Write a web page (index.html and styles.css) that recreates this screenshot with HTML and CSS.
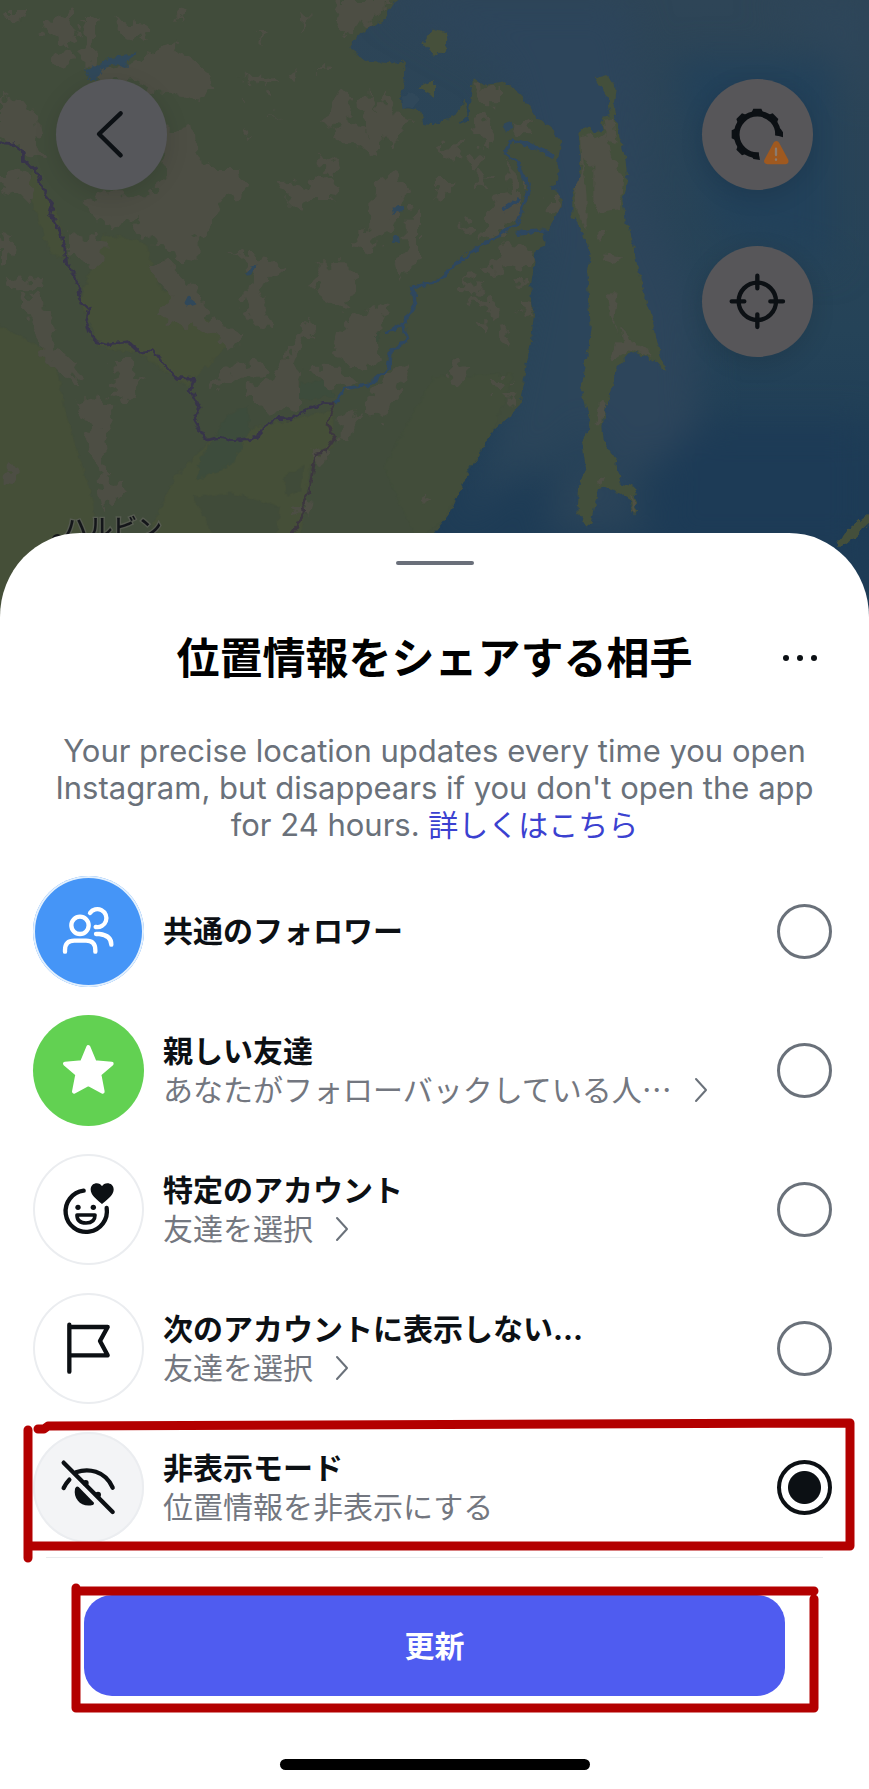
FILE: index.html
```html
<!DOCTYPE html>
<html lang="ja">
<head>
<meta charset="utf-8">
<meta name="viewport" content="width=device-width, initial-scale=1">
<title>位置情報をシェアする相手</title>
<link rel="stylesheet" href="styles.css">
</head>
<body>
<div class="screen">
  <header class="map">
    <svg class="map-art" viewBox="0 0 2607 1980" preserveAspectRatio="xMidYMin slice" aria-hidden="true">
      <defs>
        <filter id="rough" x="-5%" y="-5%" width="110%" height="110%" color-interpolation-filters="sRGB">
          <feTurbulence type="fractalNoise" baseFrequency="0.05" numOctaves="2" seed="4" result="n"/>
          <feDisplacementMap in="SourceGraphic" in2="n" scale="22" xChannelSelector="R" yChannelSelector="G"/>
        </filter>
        <filter id="patchy" x="-5%" y="-5%" width="110%" height="110%" color-interpolation-filters="sRGB">
          <feTurbulence type="fractalNoise" baseFrequency="0.03" numOctaves="2" seed="9" result="n"/>
          <feDisplacementMap in="SourceGraphic" in2="n" scale="70" xChannelSelector="R" yChannelSelector="G"/>
        </filter>
        <filter id="soft" x="-40%" y="-40%" width="180%" height="180%" color-interpolation-filters="sRGB"><feGaussianBlur stdDeviation="55"/></filter>
        <clipPath id="land"><use href="#mainland"/></clipPath>
        <linearGradient id="sea" x1="0" y1="0" x2="0" y2="1">
          <stop offset="0" stop-color="#2e4557"/><stop offset="0.5" stop-color="#254358"/><stop offset="0.75" stop-color="#1e3c56"/><stop offset="1" stop-color="#1e3c56"/>
        </linearGradient>
      </defs>
      <rect width="2607" height="1980" fill="url(#sea)"/>
      <g filter="url(#soft)">
        <path fill="#2d455b" d="M1150 0H1880L1930 260L1950 600L2080 900L2100 1350L1860 1420L1600 1100L1620 700L1500 200Z"/>
        <path fill="#22415a" d="M2020 180H2500V800L2150 700Z"/>
        <path fill="#2b455a" d="M1600 750H1740V1350L1500 1450L1360 1600L1480 1350Z"/>
        <path fill="#2b4459" d="M1680 1400L1900 1350L1930 1600H1640Z"/>
        <path fill="#1d3b56" d="M2110 1270H2607V1660H1960L2000 1350Z"/>
        <path fill="#2e465a" d="M2300 0H2607V300L2450 120Z"/>
      </g>
      <g filter="url(#rough)">
        <path id="mainland" fill="#414c3b" d="M-40-40H1215L1150 60L1080 100L1045 145L1100 185L1180 190L1215 180L1210 260L1200 300L1220 325L1260 330L1270 370L1302 372L1362 350L1397 300L1402 345L1380 372L1404 362L1418 240L1462 255L1517 245L1567 290L1602 345L1652 385L1687 425L1672 480V540L1652 560L1692 600L1662 660L1632 700L1630 740L1607 750L1602 800L1592 860V900L1602 945L1592 1030L1577 1110L1557 1220L1472 1300L1432 1370L1392 1440L1352 1540L1302 1602L1250 1700L1200 2000H-40Z"/>
        <path fill="#46503b" d="M1302 85L1345 100L1335 150L1302 168L1270 130Z M1255 265L1302 240V290Z"/>
        <path fill="#434f3b" d="M1787 235L1822 225L1850 265L1842 330L1857 400L1877 480L1882 540L1867 600L1877 660L1897 720L1912 800L1932 880L1952 940L1967 1000L1982 1070L2005 1115L1942 1070L1892 1055L1852 1100L1842 1150L1822 1200L1807 1280L1812 1330L1847 1380L1862 1450L1902 1460L1914 1510L1902 1545L1882 1490L1822 1465L1797 1470L1782 1520L1772 1570L1757 1580L1732 1540L1737 1460L1757 1400L1747 1330L1772 1270L1742 1160L1757 1080L1772 980L1767 900L1762 820L1772 760L1742 690L1717 650V580L1737 540L1742 470L1732 400L1772 375L1782 400L1812 390L1802 350L1832 345L1822 290Z"/>
        <path fill="#444f3b" d="M2620 1530L2540 1590L2505 1640L2530 1640L2620 1560Z"/>
      </g>
      <g clip-path="url(#land)">
        <g filter="url(#rough)">
          <path fill="#454f38" d="M310 700L440 730L470 850L700 1020L560 1160L420 1060L300 1040L240 900Z M-40 960L160 1060L200 1250L280 1500L300 2020H-40Z M640 1310L1000 1230L1000 1340L930 1400L900 1640H430L520 1440Z M100 500L170 640L210 780L150 760L80 560Z"/>
          <path fill="#3d4c3c" d="M680 1250L740 1220L750 1290L700 1390L590 1440L600 1380Z M900 1150L990 1140L1000 1190L890 1200Z M1090 1010L1140 990L1130 1060L1080 1050Z"/>
          <path fill="#445039" d="M1302 1130L1540 1120L1480 1290L1330 1560L1250 1620L1150 1400Z" opacity=".4"/>
          <path fill="#404b39" d="M580 1490L700 1480L840 1520L820 1640L640 1600Z M850 1430L910 1400L900 1470L860 1490Z"/>
        </g>
        <g filter="url(#patchy)" fill="#4d4e44">
          <path d="M120 60L210 40L240 90L200 140L130 100Z M350 60L430 70L440 110L390 130L350 100Z M150 150L220 160L210 200L160 190Z M30 30L80 30L60 70L20 60Z M290 215L430 180L520 120L560 170L620 210L640 260L600 300L520 280L460 270L400 240L290 250Z"/>
          <path d="M0 290L70 310L110 340L120 440L150 480L100 470L50 440L0 430Z M0 520L60 510L110 560L100 590L50 590L0 560Z M480 390L580 380L590 470L650 510L720 510L740 580L660 600L640 680L590 720L590 780L530 770L420 700L400 660L340 690L240 600L300 580L450 580L500 540Z"/>
          <path d="M440 800L500 780L570 850L640 960L690 980L730 1000L690 1050L640 1000L560 980L470 950L520 900Z M210 700L320 720L310 790L260 800L210 760Z M0 700L40 710L30 780L0 790Z M20 840L130 830L110 880L40 880Z M250 60L290 60L280 200L250 200Z M1020 0H1180L1120 60L1030 100L1010 60Z"/>
          <path d="M960 360L1020 270L1050 300L1040 360L1100 400L1080 300L1110 270L1120 340L1170 270L1190 340L1230 350L1180 440L1150 400L1130 470L1080 430L1010 430L1020 380Z M960 470L1010 480L1000 530L970 500Z M830 550L900 540L920 570L950 520L1010 550L1000 600L930 600L900 630L860 590Z M1120 560L1170 520L1230 570L1190 640L1160 700L1100 760L1050 740L1110 680Z M1220 640L1260 620L1260 780L1200 840L1190 780L1220 730Z"/>
          <path d="M960 790L1050 790L1080 850L1030 930L980 900L940 870Z M700 760L790 770L850 800L800 840L780 900L820 980L750 980L730 900L760 810Z M1040 960L1130 920L1180 900L1130 1000L1140 1080L1080 1110L1000 1060L1020 990Z M740 1170L830 1120L870 1050L930 960L940 1000L880 1060L900 1160L900 1220L800 1240L750 1210Z M620 1170L680 1100L780 1080L800 1130L720 1130Z M910 1100L1010 1100L1070 1150L1000 1170Z M1110 1170L1190 1100L1220 1090L1180 1220L1130 1260L1090 1240Z M1010 1250L1080 1230L1050 1320L1010 1310Z"/>
          <path d="M60 890L120 890L150 980L160 1050L220 1080L240 1150L190 1130L120 1060L100 980Z M340 1080L400 1080L400 1140L440 1130L380 1210L330 1190L360 1130Z M220 1210L300 1190L350 1250L310 1320L320 1440L380 1460L310 1530L290 1400L260 1310L270 1270Z M20 1380L50 1390L50 1440L20 1450Z M870 1520L930 1490L920 1550Z M940 1360L980 1350L960 1400Z M1270 1470L1285 1500L1260 1510Z"/>
          <path d="M1420 250L1500 260L1500 310L1440 310Z M1410 360L1470 350L1480 430L1450 440Z M1540 380L1600 360L1590 400L1550 400Z M1310 440L1390 430L1370 480L1320 470Z M1400 470L1440 470L1430 510Z M1440 510L1470 530L1460 570L1435 550Z M1310 540L1370 540L1340 590L1300 600Z M1520 490L1560 530L1560 590L1530 540Z M1460 640L1500 580L1560 570L1560 640L1500 700L1440 730Z M1380 660L1420 680L1400 710Z M1640 600L1690 600L1670 640L1640 640Z M1500 730L1600 740L1590 810L1520 790L1480 830L1450 800L1510 780Z M1390 830L1450 850L1430 890L1380 880Z M1540 850L1570 830L1570 860Z"/>
          <path d="M1410 900L1470 890L1500 930L1490 950Z M1420 970L1460 970L1450 1010Z M1490 970L1530 1000L1520 1040L1495 1020Z M1340 1110L1370 1080L1410 1110L1370 1150Z M1470 1140L1530 1140L1510 1170L1490 1170Z M1560 910L1600 920L1590 950L1560 930Z M1520 1190L1550 1180L1540 1210Z M730 230L780 230L830 250L800 265Z M860 220L890 210L880 245Z M950 210L980 180L990 210Z M530 30L560 20L540 70Z M770 90L800 90L790 130Z M900 40L920 40L910 100Z M720 300L735 305L725 320Z M730 400L750 390L740 415Z M810 360L830 340L815 365Z"/>
        </g>
      </g>
      <g filter="url(#rough)" fill="#4f5046">
        <path d="M1740 410L1770 400L1790 420L1820 400L1830 460L1850 500L1870 540L1860 630L1800 640L1780 600L1780 500L1750 480L1760 590L1760 690L1730 640L1725 560L1745 520Z M1810 360L1840 355L1850 430L1825 420Z M1800 690L1820 690L1800 730L1790 710Z M1810 760L1870 770L1840 790L1810 780Z M1820 880L1850 880L1840 960L1855 1000L1830 950Z M1860 980L1890 1010L1900 1030L1950 1050L1960 1070L1890 1050L1850 1080L1830 1080L1850 1030L1870 1030Z M1810 1200L1820 1210L1805 1270L1785 1270L1800 1210Z M1790 1440L1820 1430L1800 1460Z M1890 1480L1912 1510L1900 1540Z"/>
      </g>
      <g filter="url(#rough)" fill="#30485a">
        <path d="M255 205L290 195L330 175L410 160L380 185L380 205L350 195L310 205L290 240L265 240Z M735 825L755 795L770 800L745 830Z M1175 625L1205 612L1210 630L1180 645Z M1175 705L1195 705L1200 725L1180 730Z M550 905L565 890L590 910L560 920Z M1505 375L1535 365L1540 385L1515 400Z M1205 290L1240 280L1260 300L1240 325L1210 320Z"/>
      </g>
      <g fill="none" stroke-linejoin="round" filter="url(#rough)">
        <path stroke="#2e475f" stroke-width="10" d="M1003 1212L1035 1165L1110 1155L1165 1105L1170 1060L1220 1020L1210 970L1245 910L1240 860L1302 850L1362 800L1432 740L1492 710L1552 670L1577 600L1587 560L1547 480L1512 460L1537 420L1602 440L1662 470M1210 970L1155 1000M1550 700L1640 690M1510 630L1560 595"/>
        <path stroke="#37344a" stroke-width="8" d="M-10 428L30 430L70 455V485L105 505L120 545L140 590L158 610L150 640L175 680L195 750L200 790L225 825L240 870L235 885L245 910L268 925L258 970L265 995L290 1025L320 1032L385 1025L420 1057L460 1052L490 1090L530 1135L583 1138L570 1170L600 1225L583 1260L612 1310L620 1320L660 1312L700 1322L775 1312L790 1280L830 1255L870 1257L930 1225L970 1210L1003 1212"/>
        <path stroke="#3c373f" stroke-width="8" d="M1003 1212L983 1270L1003 1315L980 1355L950 1362L940 1400L925 1480L910 1500L915 1540L890 1580L860 1620"/>
      </g>
      <circle cx="172" cy="1618" r="16" fill="#14161a"/>
      <text class="map-label" x="190" y="1610">ハルビン</text>
    </svg>
    <nav class="map-controls" aria-label="地図">
      <button class="round back" type="button" aria-label="戻る">
        <svg viewBox="-166 -166 333 333" aria-hidden="true"><path class="line" d="M28-63L-37-1L28 63"/></svg>
      </button>
      <div class="stack">
        <button class="round" type="button" aria-label="設定">
          <svg viewBox="-166 -166 333 333" aria-hidden="true">
            <path d="M62 4A62 62 0 1 0 5 62" fill="none" stroke="#0c1014" stroke-width="17"/>
            <g fill="#0c1014">
              <path id="tooth" d="M-19-62L-12-77H12L19-62Z"/>
              <use href="#tooth" transform="rotate(45)"/><use href="#tooth" transform="rotate(-45)"/><use href="#tooth" transform="rotate(-90)"/><use href="#tooth" transform="rotate(-135)"/>
              <path d="M60-18L70-17L77-6V9L54 2Z M-18 60L-12 74L8 77L4 58Z"/>
            </g>
            <path d="M57 30L30 80H84Z" fill="#9f5920" stroke="#9f5920" stroke-width="19" stroke-linejoin="round"/>
            <path d="M56 43V62M56 75V76" stroke="#8b7b6f" stroke-width="7" stroke-linecap="round"/>
          </svg>
        </button>
        <button class="round" type="button" aria-label="現在地">
          <svg viewBox="-166 -166 333 333" aria-hidden="true"><circle class="line" r="56"/><path class="line" d="M0-77V-39M0 77V39M-77 0H-39M77 0H39"/></svg>
        </button>
      </div>
    </nav>
  </header>

  <main class="sheet">
    <div class="handle"></div>
    <div class="sheet-head">
      <h1>位置情報をシェアする相手</h1>
      <button class="more" type="button" aria-label="その他"><i></i><i></i><i></i></button>
    </div>
    <p class="intro">Your precise location updates every time you open Instagram, but disappears if you don't open the app for 24 hours. <a href="#more">詳しくはこちら</a></p>

    <form class="form">
      <div class="options" role="radiogroup" aria-label="位置情報をシェアする相手">
        <div class="option">
          <svg class="avatar blue" viewBox="-166 -166 333 333" aria-hidden="true"><g fill="none" stroke="#fff" stroke-width="13" stroke-linecap="round" stroke-linejoin="round"><circle cx="-25" cy="-18" r="26"/><path d="M-70 61V56Q-70 28-42 28H-7Q21 28 21 56V61M5-55A27 27 0 1 1 22-13M23 8H33Q69 12 69 40"/></g></svg>
          <div class="copy"><label for="mutual">共通のフォロワー</label></div>
          <input type="radio" name="audience" id="mutual">
        </div>
        <div class="option">
          <svg class="avatar green" viewBox="-166 -166 333 333" aria-hidden="true"><path fill="#fff" stroke="#fff" stroke-width="12" stroke-linejoin="round" d="M0-70L19-24L70-20L33 12L43 64L0 41L-43 64L-33 12L-70-20L-19-24Z"/></svg>
          <div class="copy"><label for="close">親しい友達</label>
            <button class="detail" type="button"><span>あなたがフォローバックしている人<span class="ellipsis">…</span></span><svg class="chevron" viewBox="0 0 14 26" aria-hidden="true"><path d="M2 2L12 13L2 24"/></svg></button></div>
          <input type="radio" name="audience" id="close">
        </div>
        <div class="option">
          <svg class="avatar" viewBox="-166 -166 333 333" aria-hidden="true"><path class="line" d="M55-4A62 62 0 1 1-14-56"/><circle cx="-31" cy="-6" r="8"/><circle cx="15" cy="-6" r="8"/><path class="line thin" d="M-34 17H20Q20 41-7 41T-34 17Z"/><path d="M41-16C30-26 7-42 7-59C7-81 34-83 41-69C48-83 76-81 76-59C76-42 52-26 41-16Z"/></svg>
          <div class="copy"><label for="specific">特定のアカウント</label>
            <button class="detail" type="button"><span>友達を選択</span><svg class="chevron" viewBox="0 0 14 26" aria-hidden="true"><path d="M2 2L12 13L2 24"/></svg></button></div>
          <input type="radio" name="audience" id="specific">
        </div>
        <div class="option">
          <svg class="avatar" viewBox="-166 -166 333 333" aria-hidden="true"><path class="line" d="M-57-71V70M-57-64H58L35-22L58 21H-57"/></svg>
          <div class="copy"><label for="except">次のアカウントに表示しない...</label>
            <button class="detail" type="button"><span>友達を選択</span><svg class="chevron" viewBox="0 0 14 26" aria-hidden="true"><path d="M2 2L12 13L2 24"/></svg></button></div>
          <input type="radio" name="audience" id="except">
        </div>
        <div class="option">
          <svg class="avatar grey" viewBox="-166 -166 333 333" aria-hidden="true"><path class="line" d="M-74-74L73 74M-37-45C-2-58 50-52 73 1M-57-23Q-67-13-74 2"/><path d="M-40 4Q-36-5-29-1L17 46Q18 51 13 53C-20 62-46 35-40 4Z"/><circle cx="-8" cy="-13" r="9"/><circle cx="29" cy="22" r="9"/></svg>
          <div class="copy"><label for="ghost">非表示モード</label><span class="note">位置情報を非表示にする</span></div>
          <input type="radio" name="audience" id="ghost" checked>
          <svg class="mark mark-option" viewBox="0 0 869 150" preserveAspectRatio="none" aria-hidden="true"><path d="M28 14V142M28 130H850V7L48 10L44 13H38"/></svg>
        </div>
      </div>
      <hr>
      <div class="action">
        <button class="submit" type="submit">更新</button>
        <svg class="mark mark-action" viewBox="0 0 869 138" preserveAspectRatio="none" aria-hidden="true"><path d="M76 8V128H814V19M76 11H814"/></svg>
      </div>
    </form>
    <div class="home-indicator"></div>
  </main>
</div>
</body>
</html>
```
FILE: styles.css
```css
* { box-sizing: border-box; }
body {
  margin: 0;
  background: #fff;
  color: #0c1014;
  font-family: Inter, "Noto Sans CJK JP", sans-serif;
}
button { border: 0; padding: 0; background: none; font: inherit; color: inherit; }

.screen { display: flex; flex-direction: column; min-height: 100vh; }

.map { position: relative; height: 653px; overflow: hidden; background: #1e3c56; }
.map-art { position: absolute; inset: 0; width: 100%; height: 100%; }
.map-label {
  font-family: "Noto Sans CJK JP", sans-serif;
  font-size: 74px;
  font-weight: 500;
  fill: #14161a;
  stroke: #565b50;
  stroke-width: 8px;
  paint-order: stroke;
}
.map-controls { position: relative; display: flex; justify-content: space-between; align-items: flex-start; padding: 79px 56px 0; }
.stack { display: flex; flex-direction: column; gap: 56px; }
.round { width: 111px; height: 111px; border-radius: 50%; background: #575659; box-shadow: 0 6px 24px rgba(0, 0, 0, .12); }
.back { background: #56575b; }
.round svg { display: block; width: 100%; height: 100%; }

.line { fill: none; stroke: #0c1014; stroke-width: 13px; stroke-linecap: round; stroke-linejoin: round; }
.thin { stroke-width: 11px; }

.sheet {
  position: relative;
  flex: 1;
  display: flex;
  flex-direction: column;
  margin-top: -120px;
  padding: 28px 0 19px;
  border-radius: 80px 80px 0 0 / 84px 84px 0 0;
  background: #fff;
}
.handle { width: 78px; height: 4px; margin: 0 auto; border-radius: 2px; background: #6a6f7a; }
.sheet-head { display: grid; grid-template-columns: 1fr auto 1fr; align-items: center; margin-top: 69px; padding: 0 47px; }
h1 { grid-column: 2; margin: 0; color: #000; font-size: 43px; font-weight: 700; line-height: 48px; }
.more { justify-self: end; display: flex; align-items: center; justify-content: center; gap: 8px; width: 44px; height: 44px; }
.more i { width: 6px; height: 6px; border-radius: 50%; background: #0c1014; }

.intro { margin: 50px 40px 0; color: #6a717a; font-size: 31px; line-height: 37px; text-align: center; }
.intro a { color: #3b41d0; font-size: 30px; line-height: 30px; text-decoration: none; }

.form { display: flex; flex-direction: column; margin-top: 33px; }
.options { display: flex; flex-direction: column; gap: 28px; }
.option { position: relative; display: flex; align-items: center; gap: 19px; padding: 0 37px 0 33px; }
.avatar { flex: none; width: 111px; height: 111px; border-radius: 50%; box-shadow: inset 0 0 0 2px #ebedf0; fill: #0c1014; }
.blue { background: #4595f7; box-shadow: inset 0 0 0 2px #e3f0fd; }
.green { background: #62d152; box-shadow: none; }
.grey { background: #f3f4f6; }
.copy { flex: 1; min-width: 0; display: flex; flex-direction: column; align-items: flex-start; font-size: 30px; line-height: 39px; }
.copy label { font-weight: 700; }
.note, .detail { color: #737780; }
.detail { display: flex; align-items: center; gap: 22px; line-height: 39px; }
.ellipsis { font-family: "Noto Sans CJK JP", sans-serif; line-height: 30px; }
.chevron { width: 14px; height: 26px; fill: none; stroke: #6a717a; stroke-width: 2px; stroke-linecap: round; stroke-linejoin: round; }
input[type="radio"] {
  appearance: none;
  flex: none;
  width: 55px;
  height: 55px;
  margin: 0;
  border: 3px solid #6a717a;
  border-radius: 50%;
}
input[type="radio"]:checked { border: 4px solid #0c1014; background: radial-gradient(circle, #0c1014 16px, #fff 17px); }

hr { width: calc(100% - 92px); height: 1px; margin: 14px auto 0; border: 0; background: #e9ebed; }
.action { position: relative; display: flex; margin-top: 37px; padding: 0 84px; }
.submit { flex: 1; height: 101px; padding-bottom: 4px; border-radius: 28px; background: #4f5cf0; color: #fff; font-size: 30px; font-weight: 700; }

.mark { position: absolute; left: 0; width: 100%; overflow: visible; pointer-events: none; fill: none; stroke: #b30000; stroke-width: 9px; stroke-linecap: round; stroke-linejoin: round; }
.mark-option { top: -16px; height: 150px; }
.mark-action { top: -15px; height: 138px; }

.home-indicator { width: 310px; height: 11px; margin: auto auto 0; border-radius: 6px; background: #000; }
```
